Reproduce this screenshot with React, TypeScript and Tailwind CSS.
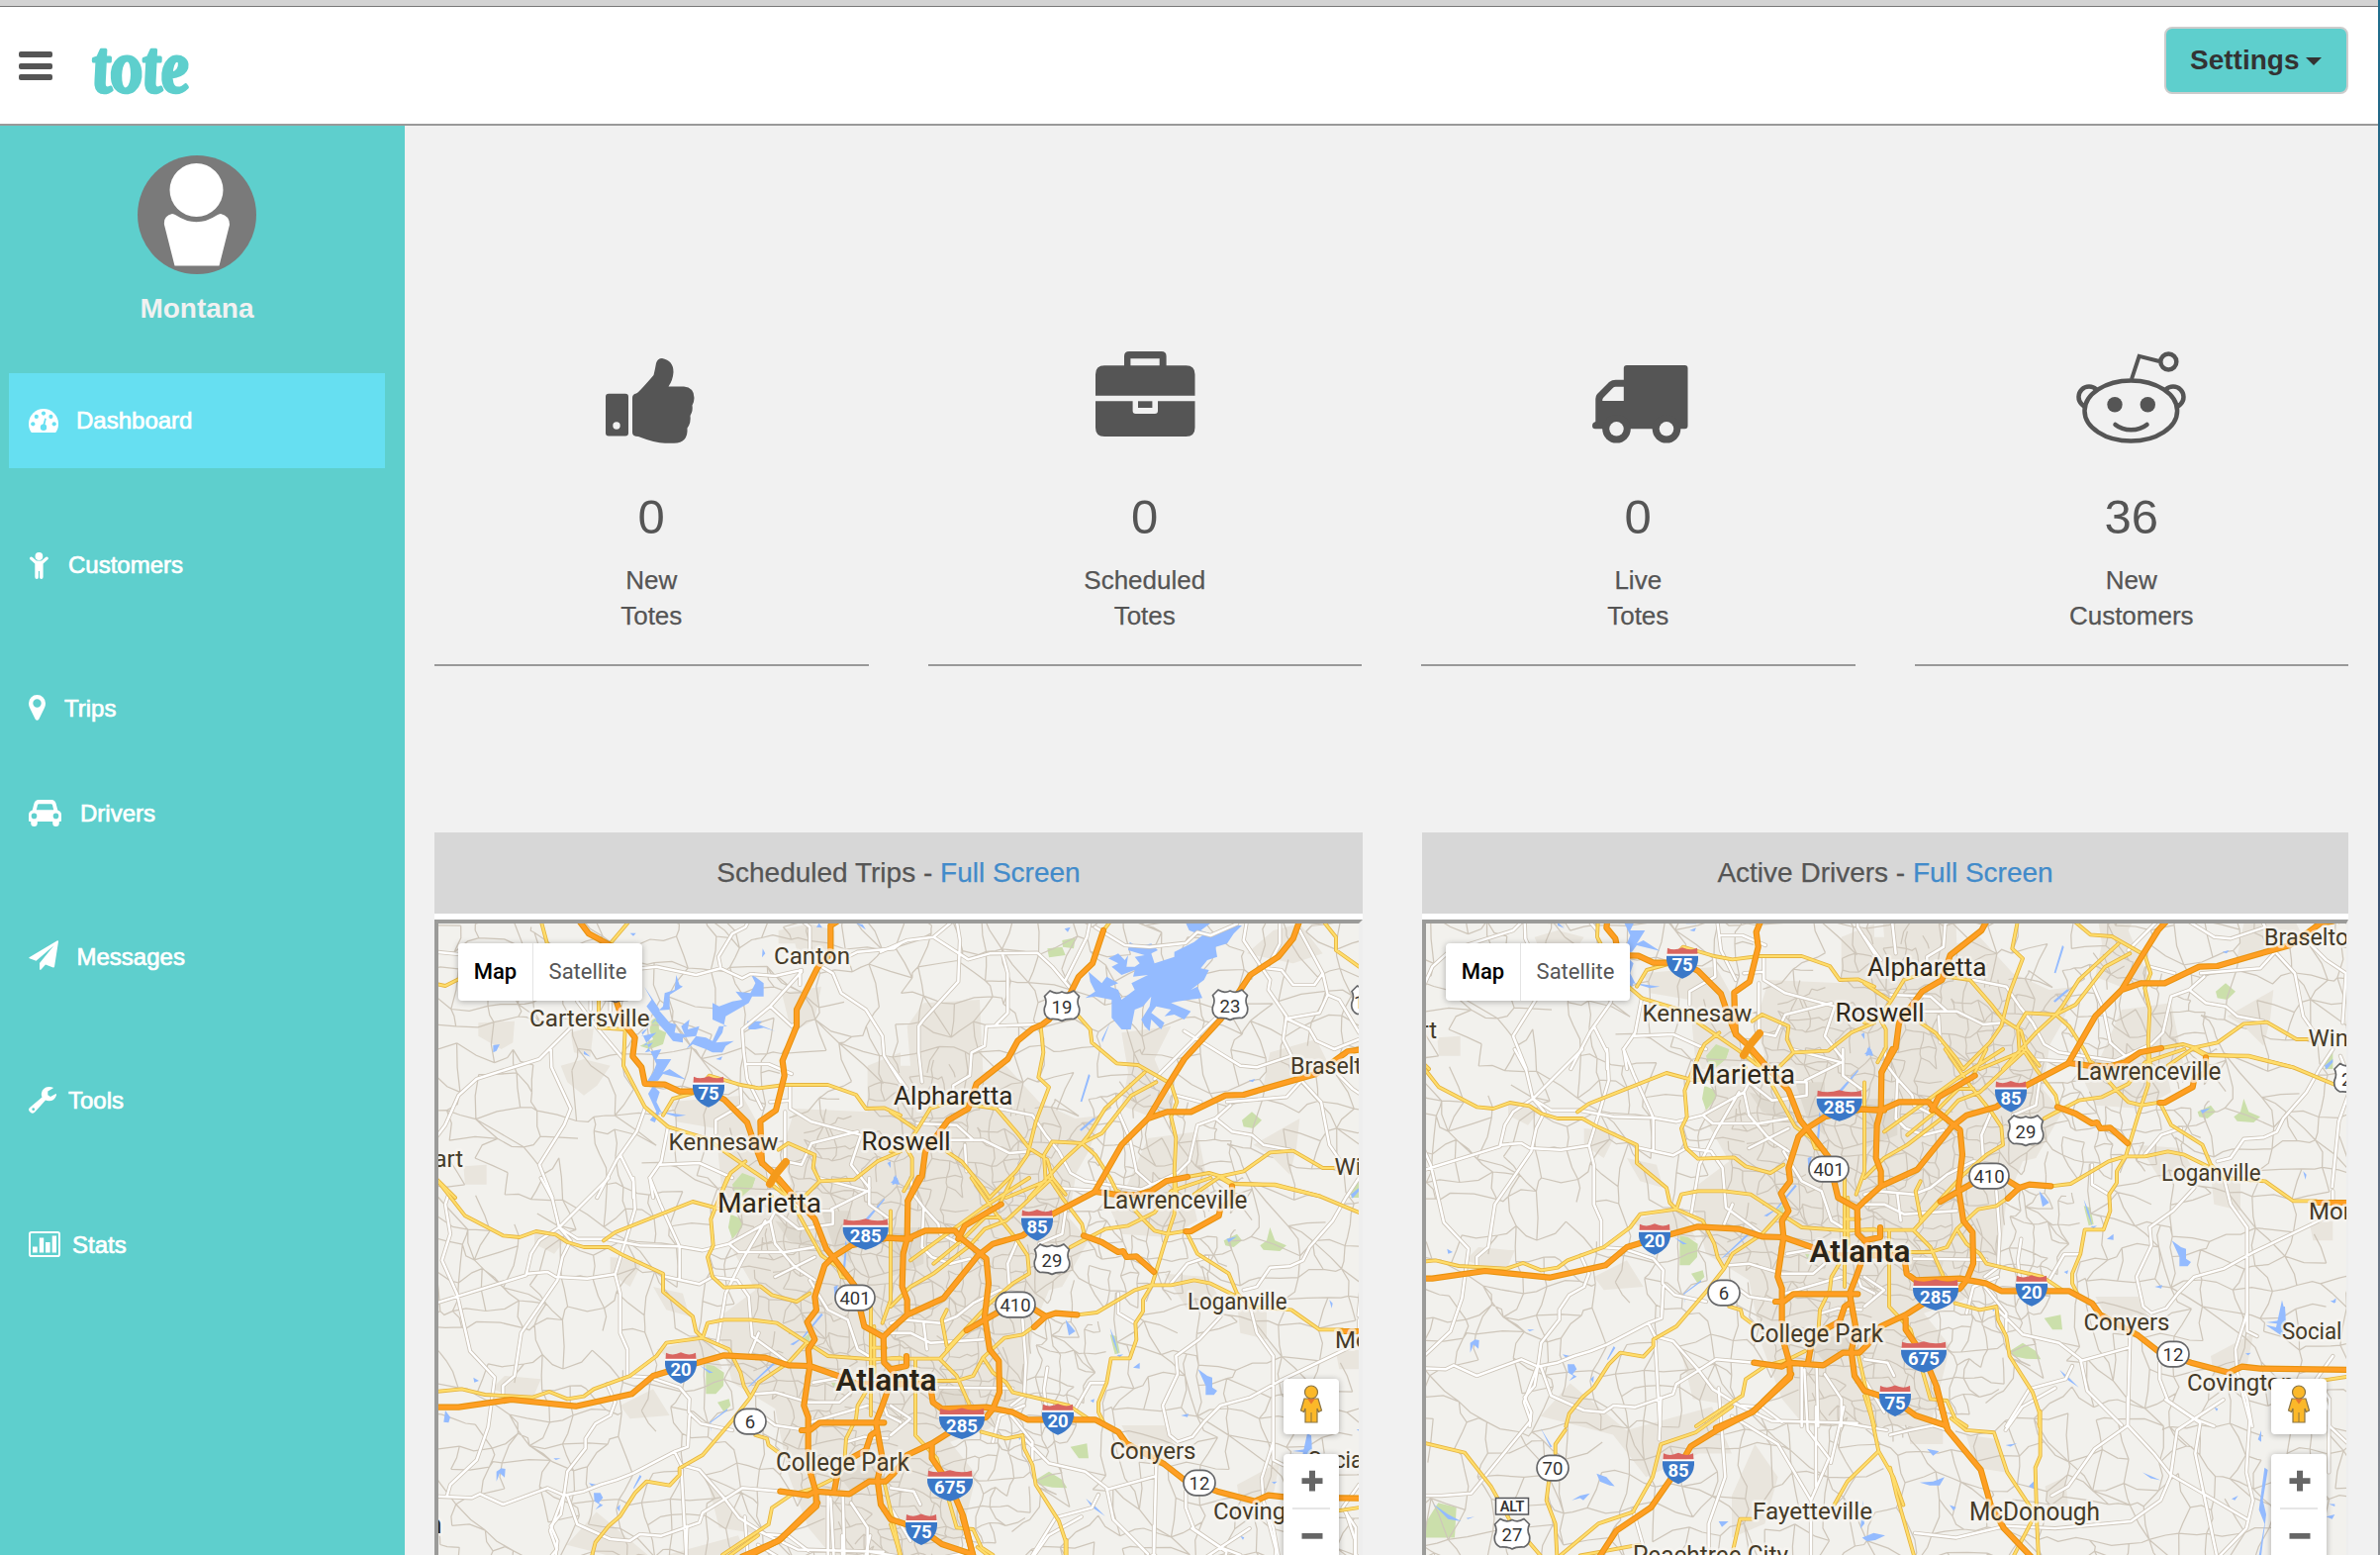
import React from "react";

/* ---------- Map data ---------- */

// Each tile holds path data in its own units, with the transform that puts it on the map plane.
const TILES: Record<string, string> = {
  nw: "translate(430 830) scale(.33333)",
  ne: "translate(900 830) scale(.33333)",
  sw: "translate(430 1190) scale(.33333)",
  se: "translate(900 1190) scale(.33333)",
  fw: "translate(446 960.5) scale(.33333 .4726)",
  fe: "translate(926 960.5) scale(.33333 .4726)",
};

type Layer = Record<string, string>;

const HIGHWAYS: Layer = {
  nw: "M465 300L495 340L560 375L577 540L600 610L635 655L628 712L655 745L665 795L725 797L770 818H860L905 842L975 912L1000 985L1020 1035L1060 1070L1120 1140M1245 305L1228 315V400L1190 440L1125 570V620L1082 725L1088 770L1062 875L1015 908L1018 1000L1020 1035",
  ne: "M645 330L612 430L570 470L545 520L480 600L460 615L430 628L385 665L355 720L260 795L235 870L175 905L145 945L105 1000L95 1075L52 1150M1240 300L1220 355L1175 410L1090 465L1060 510L1000 600L890 720L840 800L780 900L700 980L620 1120M1420 692L1385 697L1290 765L1165 800L1070 828L1015 830L910 880H838L780 900M900 1077L835 1090L790 1120L745 1132L680 1130L620 1122M1440 690L1500 680",
  sw: "M30 695H100L260 672L455 692L625 655L690 600L730 588L820 562L905 538L1030 545L1100 568L1165 570L1250 600L1310 625H1400M1065 0L1120 60L1180 125L1215 215L1235 240L1300 325L1330 450L1388 482L1390 560L1420 590L1385 690L1365 740L1385 850L1370 915L1380 990L1410 1035L1503 1065M1235 240L1210 265L1180 360L1185 400L1157 437L1180 490L1160 520L1165 570L1147 690L1160 725V870L1170 905L1183 950L1185 995L1070 1100L960 1148M1235 240L1290 205L1400 182L1470 185M1140 765H1165L1195 742H1390M1365 770L1350 780L1335 825L1290 850L1250 890L1240 945M1460 845L1420 895L1395 920H1345L1285 958L1180 950L1160 962L1075 950",
  se: "M-20 625H120L128 680L155 700L290 695L370 710L415 733H620L690 770L715 805L830 868L890 915L990 950L1105 980L1145 962L1200 968L1500 972M-10 182L50 185L105 160H195L210 180L290 245L297 320L285 420L300 520L328 555L330 650L310 700L290 725L220 745L125 805L50 840M85 0L52 70L50 185L38 230L35 330L50 370V415M620 42L490 110L400 175L310 200L265 235L160 365L50 415L0 460L-22 482M335 80L225 145L205 185M585 175L640 195L690 225L705 222L715 240L745 238L798 285M895 162H910L995 115L1000 90L1035 70V25M230 462L330 405L430 395L470 420L500 410L565 415M435 452L470 420M125 805V850L180 930L220 1025L250 1148M93 1065L155 1110L245 1140M0 580L48 570V540M1365 465H1480",
  fw: "M1140 1180L1025 1260L920 1298L835 1335L798 1381L715 1465L610 1515L550 1580",
  fe: "M140 1210L175 1300L275 1385L305 1460L345 1510L440 1580",
};

const YELLOW: Layer = {
  nw: "M350 300L370 375M615 305L560 370M30 492L60 498L100 478M525 540V625L605 630L600 740L665 865L735 925L850 960L920 1010L1030 1085L1100 1140M720 890L750 840L815 822L860 770L955 798L1010 808L1090 798H1220L1305 828L1335 870L1390 868L1440 890M30 1080L90 1140M1070 995L1100 975L1180 1010L1175 1050L1195 1090L1150 1135M1195 1090L1300 1085L1370 1030L1440 1000M890 1140L925 1065L970 1030",
  ne: "M668 300L645 330M1310 300L1350 350V390L1420 440M570 590L605 630L610 670L685 733L750 738L850 795L868 850L850 895L865 960L860 1060L868 1140M455 620L463 700L448 775L480 805L440 910L415 1010L380 1060L300 1140M0 880L80 935L120 870L180 850L320 870L385 945L420 990L475 1025L490 1080L530 1130M770 760L650 870L600 950L580 975M805 790L730 830L640 945L580 975L520 1030L420 1140M580 975L490 970L465 1010L470 1090L350 1140M580 975L620 1010L665 1080L690 1130M900 1077L965 1065L1000 1075L1070 1060L1150 1003L1220 998L1310 1050H1345M920 1130L1000 1075L1040 1098L1165 1102L1300 1135M170 1000L215 1030L280 1110L300 1140M0 1000L45 985L80 935M45 985L65 1020V1075L40 1120",
  sw: "M30 0L120 115L235 175L285 180L335 162L395 172L430 195L480 210H555L600 235L720 290V345L810 420L820 465L840 485L730 500L700 540L620 600L510 640L480 662L430 670L375 648L325 665L180 657L110 640L30 648M540 190L575 165L810 72L895 95L990 80L1050 55M915 0L865 125L872 205L855 240L870 300L905 332L1015 328L1050 355L1125 375L1165 350M840 485L855 440L905 430H985L1065 440L1220 540L1360 550L1440 545M840 485L920 520L955 590L965 630L985 665L930 735L840 840L770 880V900L740 932L670 920L635 955L590 1025L555 1055L515 1105L505 1143M985 665L1010 620L1100 560L1155 500M1000 780L1035 790L1040 810L1080 840M1060 0L1120 90L1200 235L1250 270L1260 300L1290 305M1350 390V720M1410 100V370L1385 440M1340 640L1310 690L1305 730L1275 790L1270 860M1390 920L1440 1143M900 1143L1040 1050L1050 1000L1110 960L1180 940L1230 915M1350 515H1395M1360 450V600",
  se: "M490 0L350 130L285 155L240 205L130 290L60 330L0 390M420 0L280 90L60 250M370 0L330 80M330 120H285L215 190L130 260M245 0L320 110L385 190L415 235L420 290M480 0L520 60L580 140L590 185L545 210M545 210L650 155L720 145L800 105L850 40L970 0M860 0V110L830 200L792 325M690 40L760 120L800 160L840 170L900 160M1000 0L1030 18L1165 20L1300 55L1480 130M895 160L930 230L1025 290L1050 350L1090 390L1215 400L1300 460H1370M565 415L625 408L740 340L790 325H850L920 310L970 320L1040 355M792 325L765 370V405L742 440L745 490L725 547H668L655 620L630 680V710L645 740M0 548H150L230 460M170 510L155 430L170 400M420 290L370 320L300 380L170 520M150 550L200 600L240 690M280 545L310 590L350 620L370 650L540 690L600 730M435 450L400 475L345 485L280 545L250 600L200 615H0M75 550V780L140 850L200 1060L250 1065L275 1120L310 1143M275 770L350 790L400 780L405 820L430 870L440 930L510 1040L530 1100V1143M0 1050L30 1143M1350 1010L1480 990",
  fw: "M30 1328L150 1348L230 1420L285 1490L380 1568M455 1300L425 1330V1350M405 1410L398 1450L425 1500L430 1568M440 1568L555 1500L660 1475L720 1400L745 1330L850 1305L960 1250M1380 1260L1405 1345L1450 1400L1480 1460M1405 1345L1310 1410L1270 1460M1020 1490H985L960 1568M500 1568L680 1545",
  fe: "M455 1260V1355L440 1380L445 1500L450 1575M185 1275L230 1300L315 1305L355 1390L440 1480L375 1568M0 1380L20 1440L75 1575",
};

const WHITE: Layer = {
  nw: "M30 395L100 402L330 390M655 445L700 440L820 465L895 445L960 475L985 462L1060 468L1140 450M895 445L888 410L930 340L970 320L980 300M1140 300L1165 320V400M1135 450V495M1140 455L1045 560L960 630L965 700L975 780L1020 870M1200 440L1235 460L1260 520L1335 570L1385 650L1390 710L1440 790M1280 410L1310 395L1420 385L1440 370M1045 560L1110 620L1125 610M975 735H1040L1110 765M440 625L345 720L155 780L100 830L60 920L30 960M380 690L382 745L440 870L420 920L345 1040L385 1140M460 545L520 625L600 720M665 870L640 940L580 1025L520 1140M735 925L715 1030L680 1080L690 1140M590 1010L630 1090V1140M710 1040L830 1035L930 1080M955 798L958 860L880 905V945M1105 800V870L1170 910L1320 950L1290 1040L1345 1110M1090 880V1030L1140 1040L1170 975L1310 940M1045 850L1105 845M560 545V600M500 545V570",
  ne: "M-30 395L50 360L130 350L190 300M130 350L235 418L300 400L445 398L490 440L540 500M200 300L210 360L205 485L100 600L85 620V700L95 790M340 405L355 460V580L320 615M455 615L290 620L285 680L245 700L240 770L190 800V850M605 300L595 350L530 480M620 320L710 375L785 380L895 368L930 335L970 345L1050 310M1180 300V370L1140 445L1185 450L1220 495L1285 495L1310 460L1240 330M1080 300L1070 360L1150 480L1145 510L1200 590L1190 660L1215 710L1110 745L1060 740L890 635M1310 460L1325 525L1300 580L1200 597L1270 630L1290 665L1345 690L1420 660M1325 525L1360 540L1420 640M1060 525L950 630L800 780M0 740L50 810M80 915L200 920L250 965M180 965H280L360 1005L420 1000M330 870L430 890L470 950L510 1000L545 1065L590 1090L760 1115L870 1065M225 980L230 1060M690 880L725 960L745 1060L790 1100M1030 860L985 900L930 920L905 1030L870 1065M985 900L1035 940L1095 950L1130 980L1210 995M1250 790L1305 850L1330 980L1385 1060M865 830L940 850M1250 780L1200 835L1020 850M1350 760L1400 810L1460 850L1450 1000",
  sw: "M350 0L385 65L405 150L440 190L415 240L400 310L290 470L270 600L235 630V655M405 150L345 190L320 230L305 295L30 380M405 150L555 0M70 50L60 80L75 170L50 250L95 350L135 525L210 605L190 755L155 855L75 930L65 965M310 290L370 285L395 300L490 305L575 292L590 350V470L612 520V600L680 605L770 635L800 670L798 710L835 745L930 765M575 292L610 180L635 95L630 0M405 150L460 185H545L650 205L770 208L840 220L920 200L1045 130L1060 100M770 208V305M720 298L830 322L870 300M680 0L712 80L770 208M30 965L140 970L165 958L235 990L370 940L420 962L480 950L530 930L580 915L630 895L755 830L775 870L830 885L905 970L950 1030L1030 1080L1100 1085L1160 1130M420 962L430 890L485 820V790L515 745L560 720L575 680L550 625M420 962L410 1020L380 1055L400 1100L395 1143M430 965L460 1050L560 1095L620 1100L650 1080L715 1085L830 1045L840 1015L905 975L960 940L1075 950M755 830L795 815L800 720M775 870L790 1143M920 200L950 225H1090L1180 210M1045 130L1060 200L1120 270L1180 310M1060 100L1130 155L1180 150M1030 130L960 250L910 350L885 500M870 300L945 310L980 360L990 480L1100 560M1010 470L985 530M1000 655L1060 650L1160 680H1255L1290 650M1175 620L1290 600M1020 720L1060 750L1140 762M1170 740L1340 690M1060 70L1200 100H1235V140L1130 155M1220 950V1143M1265 960L1270 1143M1290 985L1340 1060V1143M1165 310L1220 400L1280 430L1310 520L1360 550M1280 800L1330 785L1400 790M1385 680L1400 720L1440 740M1060 300L1180 240M1190 0L1340 40L1230 95M1345 0V80L1400 120",
  se: "M60 0L70 50L100 90L145 140L150 170L210 200M100 90L95 210L125 240L180 260L240 245M0 440L40 430L150 440L200 420L250 380L330 340L420 355M0 470H60L120 500L280 490M385 190L355 260L360 330M400 430L410 560L405 660L365 690M150 635L370 638M475 575L465 640L470 690M650 622H605L560 700M405 690L330 720L310 800M365 720L430 800V855M405 790L480 865L590 890L655 940L675 1035L780 1140M655 945L800 905M630 960L610 1000L500 1030L430 1143M805 870L798 1143M895 950V1000L920 1065L1000 1120L1060 1143M1420 0L1380 60L1340 130L1270 210L1250 250L1210 268L1150 272L1110 330L1070 340M1090 390L1110 470L1160 540V855L1190 870M1160 800L1125 910L1130 980L1160 1060L1175 1143M1000 420L935 490L865 540L870 595L825 690L845 780L870 800L915 785L950 740L1000 690L1090 665L1180 615L1420 500V430M1420 930L1370 1000L1410 1060V1143M690 350V410L740 440M850 320L900 260L960 240M0 690L60 730L0 780M0 940L70 950L90 990M100 440L110 520M0 1000L60 1100M500 30L640 40M450 200L520 170L530 100",
  fw: "M30 1440H80L170 1435L350 1280L330 1240L370 1165M745 1230L740 1320M960 1240L1080 1280L1340 1285M920 1210L940 1400L890 1500V1568M960 1270L1100 1330L1200 1450M1180 1170L1190 1300L1255 1360L1200 1450V1568M1215 1250V1420M1300 1250L1260 1370M660 1470L700 1568M1300 1285L1430 1300",
  fe: "M720 1230V1290L800 1350L850 1395L960 1440L1080 1490M720 1290L620 1340L540 1420L490 1440M835 1235L940 1285L925 1350L990 1568M1010 1235L870 1300L850 1400L820 1450L730 1495L500 1510L350 1505L200 1530L75 1520M1060 1200L1090 1280L1080 1390L1100 1450L1080 1510L1000 1568M1300 1195L1330 1260V1390M0 1310L60 1300L130 1290L175 1300M350 1300L400 1250L500 1210M1330 1290L1390 1330M1365 500L1400 560L1360 640L1340 780",
};

const URBAN: Layer = {
  nw: "M160 610L270 605L265 670L230 690L160 650ZM410 740L480 720L560 740L520 800L480 830L430 790ZM740 850L960 830L1010 920L1040 1140H900L880 930L760 910ZM1070 330L1165 310L1240 330V420L1140 440L1120 370H1070ZM1080 520L1200 500L1180 600L1110 640ZM115 1045L185 1040V1100H120ZM1340 740L1440 700V1140H1120L1080 1000L1120 870L1340 880ZM440 640L510 620L500 710L450 700Z",
  ne: "M50 620L100 550L270 540L280 760L350 740L450 850L560 900L640 890L600 1000L520 1140H0V740L60 740ZM1080 400L1160 330L1240 310L1310 400L1220 430ZM700 640L850 620L800 720L860 860L800 900L700 860L720 760ZM1150 700L1290 660L1330 740L1230 790L1130 800ZM1100 980L1240 900L1230 990L1210 1070L1150 1010ZM780 960L930 940L970 1140H700Z",
  sw: "M1130 0H1440V1143H1230L1160 1060L1100 900L1060 700L930 620L880 430L1000 340L920 200L960 80L1050 70ZM330 160L430 180L390 230L330 200ZM560 240L660 250L620 330L560 290ZM240 600L350 610L320 680L200 640ZM590 690L690 640L740 720L620 730ZM700 520L860 480L900 580L760 560ZM850 900L920 980L1010 1080L890 1060ZM690 330L780 350L800 420L730 400Z",
  se: "M0 0H560L540 120L600 190L520 330L480 340L430 460L410 640L300 760L180 800L260 900L200 1143H0ZM640 40L900 0L930 130L840 180L700 170ZM830 290L960 300L1000 370L900 400ZM1050 380L1140 400V490L1060 470ZM700 750L830 750L880 850L760 860ZM1050 930L1180 860L1160 960L1060 1000ZM1350 530L1420 520V580H1360Z",
  fw: "M380 1270L470 1200L640 1300L900 1250L960 1350L860 1350L700 1400L600 1310ZM960 1440L1030 1330L1100 1400L1060 1500L960 1530Z",
  fe: "M230 1310L330 1320L350 1390L260 1380ZM470 1420L530 1400L540 1460L480 1480ZM60 1280H160V1330H60Z",
};

const AIRFIELD: Layer = {
  sw: "M1250 900L1360 850L1370 910L1290 950ZM1200 100H1290V260L1240 220ZM1060 130L1160 160L1180 220L1100 190Z",
  se: "M0 150H100V260L0 300ZM130 640H240L230 690L150 690Z",
};

const PARKS: Layer = {
  nw: "M680 605L705 590L708 630L730 640L720 675L680 690L650 680L690 660L680 635ZM930 1100L960 1065L1000 1080L990 1110L940 1140Z",
  ne: "M1065 905L1095 880L1125 905L1100 930L1070 925ZM475 385L520 380L530 405L480 412ZM520 360L560 352L555 385L522 380ZM1390 1130L1420 1085V1140Z",
  sw: "M850 565L875 570L905 590L903 630L880 655L850 655ZM960 0H1000L990 30L955 60L960 100L930 80ZM925 110L960 125L960 150L930 185L918 150ZM885 680L920 670L925 690L905 710ZM1140 490L1165 470V500ZM1230 620L1265 625L1240 640Z",
  se: "M1010 190L1050 170L1065 190L1040 210L1015 205ZM1120 205L1140 190L1150 150L1165 190L1200 205L1180 222L1130 218ZM440 915L480 890L520 915L535 940L490 938L450 930ZM665 475L685 480L695 530L680 535ZM545 815L595 805L600 850L570 850ZM1395 60L1410 20L1420 60Z",
  fw: "M30 1500L70 1455L125 1465L120 1530H30Z",
};

const WATER: Layer = {
  nw: "M663 500L710 570L720 560L725 520L755 510L760 465L770 495L780 500L740 525V570L708 572L740 610L760 615L755 640L785 645L775 620L800 600L795 630L830 620L820 650L850 655L870 665L890 620L915 620L870 600V550L890 560L930 545L960 540L940 515L985 520L1000 490L985 460L1025 490V530L990 530L980 550L910 590L900 640L880 670L935 665L910 680L900 700L870 700L850 690L810 675L790 690L820 650L780 655V670L750 665L730 640L695 600L655 650L700 640L660 680L690 670L665 700L715 690L700 720L745 720L720 760L740 750L790 782L720 765L705 785L670 790L690 760L700 735L655 640L700 600L670 560L685 540ZM690 800L710 820L700 850L715 880L790 890L760 895L710 880L695 912L680 905L700 880L675 825ZM975 605L1020 605L1010 615L1060 635L1025 625L1000 630L980 630ZM205 700V678L225 675L215 695ZM480 705L500 713L480 695ZM1185 320L1193 308L1203 322ZM1022 385L1030 400L1020 412ZM1305 308L1335 328L1325 312ZM620 338H638L630 347ZM880 720L900 712L895 723ZM1415 1100L1435 1095L1420 1075ZM1400 1035L1410 1030V1050Z",
  ne: "M895 308H970L940 330L970 340L1000 330L1035 315L1065 315L1040 340L1020 370L985 380L990 410L960 420L940 445L965 450L950 480L910 510L930 500L945 535L905 540L870 545L850 550L910 575L890 600L860 585L830 590L850 570L805 560L790 580L830 610L820 630L790 600L785 635L770 620L760 600L785 560L790 530L765 560L740 570L728 630L700 630L670 595V540L620 530L590 535L620 515L605 485L600 455L640 490L655 470L690 490L665 500L690 510L700 540L740 510L730 490L780 465L735 470L740 450L700 465L670 440L690 430L660 415L690 400L710 420L720 405L715 440L740 440L755 430L740 410L770 405L720 390L725 365L750 380L790 370L810 390L790 400L800 430L860 410L860 395L920 365L945 345L905 330ZM600 765L605 770L580 850L575 848ZM615 898L620 902L578 938L573 934ZM527 325L545 320L537 335ZM5 1100L15 1070L25 1095ZM1085 785L1105 780L1098 790ZM640 660L665 610L642 670Z",
  sw: "M55 740L60 705L75 725L70 742ZM145 605L162 615L148 620ZM215 890L230 880L242 882L240 908L225 895L215 920ZM495 925L520 930L508 938ZM510 955L530 955L538 970L525 985L538 992L515 1005L528 990L512 980ZM580 1000L590 990L588 1012ZM388 850H410L395 855ZM833 570L872 590L860 592L845 580ZM862 740L915 700V705L865 742V770ZM975 635L1070 545L1075 550L985 630ZM1105 505L1140 485L1200 410L1205 415L1150 480L1115 507ZM1238 330L1250 325L1245 370L1240 360ZM1272 210V190L1278 200L1272 280L1266 270ZM1333 125L1390 62L1392 66L1340 130ZM1415 15L1430 0L1437 20ZM630 940L650 900L655 905L632 942Z",
  se: "M735 575L755 560V578ZM932 580L960 600L975 605V635L990 645L980 658H955V630ZM880 720L903 715L900 725ZM1265 780H1275L1278 835L1218 828L1260 822ZM530 430L560 465L540 478ZM665 455L680 490L692 540L675 495ZM685 538L705 535L695 543ZM1018 185L1050 178L1025 195ZM1330 370L1340 380L1337 395ZM605 675L618 670L615 682ZM1155 922L1172 920L1163 928ZM592 972L620 995L650 1025L610 998ZM1060 1085L1072 1090L1068 1097ZM388 785L395 790L390 795ZM1395 50L1420 30V40L1400 62ZM1412 762H1425V770ZM0 15L15 0L25 20Z",
  fw: "M550 1393L580 1400L605 1420L590 1418L560 1410ZM475 1450L500 1440L530 1435L510 1450L500 1445ZM55 1458L100 1480L140 1495L100 1490ZM920 1495H950L930 1507ZM1355 1530L1390 1520L1425 1525L1395 1535L1370 1538ZM1350 1510L1358 1450L1362 1500ZM380 1295L415 1335L410 1337ZM155 1488L180 1485L160 1490Z",
  fe: "M90 1412L130 1410L165 1400L150 1418L120 1418ZM112 1340L148 1345L130 1355ZM350 1332L385 1328L365 1335ZM765 1390L820 1407L790 1403ZM1135 1380L1145 1385L1130 1450L1140 1480L1125 1568H1118L1135 1500L1118 1470ZM1115 1320L1125 1300V1325ZM1035 1447L1055 1440L1045 1450ZM180 1460L200 1465L192 1472ZM420 1420L435 1410V1425ZM1322 1485L1348 1480L1340 1490ZM1330 1458H1348V1463ZM1138 1075L1170 1080L1188 1022L1198 1050L1190 1100ZM1338 1025L1352 1018L1350 1028Z",
};

// Deterministic street mesh: jittered grid nodes joined by irregular edges.
function streetMesh(
  x0: number, y0: number, x1: number, y1: number, step: number, keep: number, seed: number,
  inside: (x: number, y: number) => boolean,
) {
  let s = seed;
  const rnd = () => {
    s = (s * 1664525 + 1013904223) % 4294967296;
    return s / 4294967296;
  };
  const cols = Math.ceil((x1 - x0) / step) + 1;
  const rows = Math.ceil((y1 - y0) / step) + 1;
  const node: number[][][] = [];
  for (let r = 0; r < rows; r++) {
    node.push([]);
    for (let c = 0; c < cols; c++)
      node[r].push([x0 + (c + (rnd() - 0.5) * 0.85) * step, y0 + (r + (rnd() - 0.5) * 0.85) * step]);
  }
  let d = "";
  const edge = (a: number[], b: number[]) => {
    const k = rnd();
    const mx = (a[0] + b[0]) / 2 + (rnd() - 0.5) * step * 0.3;
    const my = (a[1] + b[1]) / 2 + (rnd() - 0.5) * step * 0.3;
    if (k < keep && inside(mx, my))
      d += `M${a[0].toFixed(1)} ${a[1].toFixed(1)}L${mx.toFixed(1)} ${my.toFixed(1)}L${b[0].toFixed(1)} ${b[1].toFixed(1)}`;
  };
  for (let r = 0; r < rows; r++)
    for (let c = 0; c < cols; c++) {
      if (c + 1 < cols) edge(node[r][c], node[r][c + 1]);
      if (r + 1 < rows) edge(node[r][c], node[r + 1][c]);
      if (c + 1 < cols && r + 1 < rows && (r * 7 + c * 3) % 5 === 0) edge(node[r][c], node[r + 1][c + 1]);
    }
  return d;
}

const metro = (x: number, y: number) =>
  Math.hypot((x - 935) / 175, (y - 1330) / 250) < 1 || Math.hypot((x - 1120) / 140, (y - 1210) / 110) < 1;
const MESH_RURAL = streetMesh(435, 925, 1400, 1715, 28, 0.74, 7, (x, y) => !metro(x, y));
const MESH_METRO = streetMesh(700, 1060, 1290, 1610, 16, 0.7, 21, metro);

const LABELS: { t: string; x: number; y: number; w?: number; s: number; c?: string; b?: number; end?: boolean }[] = [
  { t: "Canton", x: 782, y: 973.5, w: 77, s: 24 },
  { t: "Cartersville", x: 535, y: 1036.5, w: 121.5, s: 24 },
  { t: "Kennesaw", x: 675.5, y: 1161.7, w: 111, s: 24 },
  { t: "art", x: 468, y: 1178.7, s: 24, end: true },
  { t: "Marietta", x: 725, y: 1224.7, w: 105, s: 27, c: "#2f281a" },
  { t: "Roswell", x: 870.5, y: 1161.7, w: 90, s: 25.5, c: "#2f281a" },
  { t: "Alpharetta", x: 903, y: 1115.7, w: 120.5, s: 26, c: "#2f281a" },
  { t: "Braselton", x: 1304, y: 1085.3, w: 98, s: 24 },
  { t: "Winder", x: 1348.5, y: 1187, s: 24 },
  { t: "Lawrenceville", x: 1114, y: 1220.5, w: 146.5, s: 25 },
  { t: "College Park", x: 784, y: 1485.5, w: 135, s: 25 },
  { t: "Loganville", x: 1200, y: 1323.3, w: 100.5, s: 24 },
  { t: "Monroe", x: 1349, y: 1361.7, s: 24 },
  { t: "Conyers", x: 1121.5, y: 1473.5, w: 87, s: 24 },
  { t: "Covington", x: 1226, y: 1535, s: 24 },
  { t: "Social", x: 1322, y: 1483.3, w: 60.5, s: 23 },
  { t: "Fayetteville", x: 787, y: 1664.7, w: 121, s: 24 },
  { t: "McDonough", x: 1006, y: 1665.5, w: 132, s: 25 },
  { t: "Peachtree City", x: 666, y: 1710, w: 157, s: 25 },
  { t: "n", x: 446.5, y: 1549, s: 26, c: "#2f281a", end: true },
  { t: "Atlanta", x: 844.5, y: 1405, w: 102, s: 31, c: "#2a2418", b: 600 },
];

const INTERSTATES: [string, number, number][] = [
  ["75", 716, 1103.2], ["285", 874.7, 1247.2], ["20", 688, 1382.3], ["85", 1048, 1238], ["20", 1069, 1434.3],
  ["285", 972, 1438.6], ["675", 960, 1501.2], ["75", 931, 1545.5], ["85", 712, 1613.8],
];
const STATES: [string, number, number][] = [
  ["401", 864, 1311], ["6", 758, 1436], ["410", 1026, 1318], ["12", 1212, 1498], ["70", 585, 1613],
];
const US_ROUTES: [string, number, number][] = [
  ["19", 1073, 1016], ["23", 1243, 1015], ["29", 1063, 1272], ["", 622, 997], ["129", 1383.5, 1011], ["29", 1392.5, 1219.5], ["27", 544, 1679.5],
];

function Roads({ layer, stroke, width }: { layer: Layer; stroke: string; width: number }) {
  return (
    <g fill="none" stroke={stroke} strokeWidth={width} strokeLinejoin="round" strokeLinecap="round">
      {Object.entries(layer).map(([k, d]) => (
        <path key={k} d={d} transform={TILES[k]} vectorEffect="non-scaling-stroke" />
      ))}
    </g>
  );
}

function Areas({ layer, fill }: { layer: Layer; fill: string }) {
  return (
    <g fill={fill}>
      {Object.entries(layer).map(([k, d]) => (
        <path key={k} d={d} transform={TILES[k]} />
      ))}
    </g>
  );
}

function Interstate({ n, x, y }: { n: string; x: number; y: number }) {
  const w = n.length === 3 ? 23 : 16;
  return (
    <g transform={`translate(${x} ${y})`}>
      <path d={`M${-w + 1} -15.5Q${-w / 2} -12 0 -16Q${w / 2} -12 ${w - 1} -15.5L${w - 0.5} -9H${-w + 0.5}Z`} fill="#d96560" />
      <path d={`M${-w} -9.5H${w}V-7H${-w}Z`} fill="#fff" />
      <path d={`M${-w} -7.5H${w}Q${w + 1} 9 0 15.5Q${-w - 1} 9 ${-w} -7.5Z`} fill="#3a78c8" />
      <text y="8" textAnchor="middle" fontSize="18.5" fontWeight="700" fill="#fff">{n}</text>
    </g>
  );
}

function StateShield({ n, x, y }: { n: string; x: number; y: number }) {
  const w = n.length === 3 ? 40 : 32;
  return (
    <g transform={`translate(${x} ${y})`}>
      <rect x={-w / 2} y="-12.7" width={w} height="25.5" rx="12.7" fill="#fff" stroke="#666769" strokeWidth="1.7" />
      <text y="6.5" textAnchor="middle" fontSize="18.5" fill="#333">{n}</text>
    </g>
  );
}

function UsShield({ n, x, y }: { n: string; x: number; y: number }) {
  return (
    <g transform={`translate(${x} ${y})`}>
      <path
        d="M-12 -15Q-6 -11 0 -14Q6 -11 12 -15L17.5 -9.5Q14.5 -4 17.5 2Q19 10 12 13.5Q4 13 0 15.5Q-4 13 -12 13.5Q-19 10 -17.5 2Q-14.5 -4 -17.5 -9.5Z"
        fill="#fff" stroke="#666769" strokeWidth="1.7" strokeLinejoin="round"
      />
      {n && <text y="7.5" textAnchor="middle" fontSize="18.5" fill="#333">{n}</text>}
    </g>
  );
}

function MapCanvas({ x, y, width }: { x: number; y: number; width: number }) {
  return (
    <svg className="block shrink-0 font-['Roboto',sans-serif]" width={width} height={642} viewBox={`${x} ${y} ${width} 642`}>
      <rect x={x} y={y} width={width} height="642" fill="#f2f1ed" />
      <Areas layer={URBAN} fill="#e9e5dd" />
      <Areas layer={AIRFIELD} fill="#dfdad0" />
      <Areas layer={PARKS} fill="#cbdfab" />
      <g fill="none" stroke="#cec6ba" strokeWidth="1.25">
        <path d={MESH_RURAL} />
        <path d={MESH_METRO} />
      </g>
      <Areas layer={WATER} fill="#94bbff" />
      <Roads layer={WHITE} stroke="#cdc5b9" width={4.2} />
      <Roads layer={WHITE} stroke="#ffffff" width={2.5} />
      <Roads layer={YELLOW} stroke="#e5b441" width={3.9} />
      <Roads layer={YELLOW} stroke="#ffdd6b" width={2.2} />
      <Roads layer={HIGHWAYS} stroke="#e8930f" width={6.2} />
      <Roads layer={HIGHWAYS} stroke="#ff9f24" width={4} />
      <path d="M794 1174L784 1186L778 1196" fill="none" stroke="#f49a1b" strokeWidth="8" strokeLinecap="round" />
      {LABELS.map((l) => (
        <text
          key={l.t} x={l.x} y={l.y} fontSize={l.s} fontWeight={l.b ?? 400} fill={l.c ?? "#453b28"} textLength={l.w}
          lengthAdjust="spacingAndGlyphs" textAnchor={l.end ? "end" : "start"} stroke="#f8f6f2" strokeOpacity=".72"
          strokeWidth="5.5" strokeLinejoin="round" paintOrder="stroke"
        >
          {l.t}
        </text>
      ))}
      {INTERSTATES.map(([n, a, b]) => <Interstate key={`${a}`} n={n} x={a} y={b} />)}
      {STATES.map(([n, a, b]) => <StateShield key={`${a}`} n={n} x={a} y={b} />)}
      {US_ROUTES.map(([n, a, b]) => <UsShield key={`${a}`} n={n} x={a} y={b} />)}
      <rect x="527.5" y="1643.5" width="33" height="16.5" fill="#fff" stroke="#55565a" strokeWidth="1.5" />
      <text x="544" y="1657" textAnchor="middle" fontSize="14.5" fontWeight="600" fill="#333">ALT</text>
    </svg>
  );
}

/* ---------- Icons ---------- */

const ThumbIcon = () => (
  <svg width="90" height="86" viewBox="0 0 90 86" className="-translate-x-px fill-[#555]">
    <path fillRule="evenodd" d="M3 35.7H20Q23 35.7 23 38.7V75.5Q23 78.5 20 78.5H3Q0 78.5 0 75.5V38.7Q0 35.7 3 35.7ZM11 64.3A3.7 3.7 0 1 0 11 71.7A3.7 3.7 0 1 0 11 64.3Z" />
    <path d="M27 40Q27 36 31 35.5Q33 35 48.5 17Q50 11 51 5Q52.5 0 57 0Q68.5 2 68.5 14Q68 22 63.5 28.5H79Q89.5 29.5 89.5 40Q89.5 44 87.5 47.5Q88.5 53 85.5 58Q86.5 65 82.5 70.5Q83.5 85.5 69 85.7H60Q50 85.7 33 79Q27 79 27 75Z" />
  </svg>
);

const BriefcaseIcon = () => (
  <svg width="101" height="86" viewBox="0 0 101 86" className="translate-x-px fill-[#555]">
    <path d="M0 44.7V23.3Q0 14.3 9 14.3H29V5Q29 0 34 0H66.6Q71.6 0 71.6 5V14.3H91.5Q100.5 14.3 100.5 23.3V44.7ZM35.4 14.3H64.7V7.3H35.4Z" fillRule="evenodd" />
    <path d="M0 50.3H37.6V60Q37.6 63 40.6 63H60Q63 63 63 60V50.3H100.5V77Q100.5 86 91.5 86H9Q0 86 0 77Z" />
    <path d="M43 50.3H57.4V57H43Z" />
  </svg>
);

const TruckIcon = () => (
  <svg width="97" height="79" viewBox="0 0 97 79" className="translate-x-0.5 fill-[#555]">
    <path fillRule="evenodd" d="M35 0H93.5Q96.5 0 96.5 3V61Q96.5 64.3 93.5 64.3H3Q0 64.3 0 61Q0 58 3.3 57V34Q3.3 31 5 29L17 17Q20 14.7 23.7 14.7H31.8V3Q31.8 0 35 0ZM10.2 36H31.8V21.7H23.5Q22 21.7 21 22.7L11 33Q10.2 34 10.2 36Z" />
    <circle cx="24.5" cy="64.3" r="14.3" /><circle cx="75" cy="64.3" r="14.3" />
    <circle cx="24.5" cy="64.3" r="7.2" fill="#f1f1f1" /><circle cx="75" cy="64.3" r="7.2" fill="#f1f1f1" />
  </svg>
);

const RedditIcon = () => (
  <svg width="111" height="94" viewBox="0 0 111 94" className="translate-y-px fill-none stroke-[#555]" strokeWidth="4.5">
    <circle cx="13" cy="46" r="10.5" /><circle cx="98" cy="46" r="10.5" />
    <ellipse cx="55.3" cy="60" rx="46.8" ry="30.6" fill="#f1f1f1" />
    <path d="M56 28L63.6 4.8L84 10" strokeWidth="4" />
    <circle cx="93.3" cy="10.5" r="8" />
    <circle cx="39" cy="53.7" r="7.7" fill="#555" stroke="none" /><circle cx="72.3" cy="53.7" r="7.7" fill="#555" stroke="none" />
    <path d="M39.500 74Q46 79.3 55.5 79.3Q65 79.3 71.5 74" strokeLinecap="round" />
  </svg>
);

const GaugeIcon = () => (
  <svg width="30" height="24" viewBox="0 0 30 24" fill="#fff">
    <path d="M2.8 24Q0 20.5 0 15A15 15 0 0 1 30 15Q30 20.5 27.2 24Z" />
    <g fill="#66dff1">
      <circle cx="4.3" cy="15.3" r="2.1" /><circle cx="7.8" cy="7.9" r="2.1" /><circle cx="15" cy="4.6" r="2.1" />
      <circle cx="22.4" cy="7.9" r="2.1" /><circle cx="25.7" cy="15.3" r="2.1" /><circle cx="15" cy="18.8" r="3.2" />
      <path d="M14.2 17L16.2 9.6L17.8 10L16 17.5Z" />
    </g>
  </svg>
);

const ChildIcon = () => (
  <svg width="20" height="27" viewBox="0 0 20 27" fill="#fff">
    <circle cx="10.4" cy="4" r="3.9" />
    <path d="M1.2 5.3Q2.3 3.8 3.8 5L7.8 8.5H13L17 5Q18.5 3.8 19.6 5.3Q20.3 6.5 19 7.6L14.6 11.5V25Q14.6 27 12.7 27Q11 27 11 25.3V19H9.9V25.3Q9.9 27 8.2 27Q6.3 27 6.3 25V11.5L1.8 7.6Q.5 6.5 1.2 5.3Z" />
  </svg>
);

const MarkerIcon = () => (
  <svg width="17" height="26" viewBox="0 0 17 26" fill="#fff" className="-translate-y-px">
    <path fillRule="evenodd" d="M8.5 0A8.5 8.5 0 0 1 17 8.5Q17 10.8 16 13L10.4 24.5Q8.5 27 6.6 24.5L1 13Q0 10.8 0 8.5A8.5 8.5 0 0 1 8.5 0ZM8.5 4.3A4.2 4.2 0 1 0 8.5 12.7A4.2 4.2 0 1 0 8.5 4.3Z" />
  </svg>
);

const CarIcon = () => (
  <svg width="33" height="27" viewBox="0 0 33 27" fill="#fff" className="-translate-y-px">
    <path fillRule="evenodd" d="M10 0H23Q26.5 0 27.5 3.5L29.3 10.5Q33 11.5 33 15V21Q33 22 32 22H30.8V23.5Q30.8 27 27.5 27Q24.2 27 24.2 23.5V22H8.8V23.5Q8.8 27 5.5 27Q2.2 27 2.2 23.5V22H1Q0 22 0 21V15Q0 11.5 3.7 10.5L5.5 3.5Q6.5 0 10 0ZM10.3 4.2Q9.3 4.2 9 5.2L7.8 10.3H25.2L24 5.2Q23.7 4.2 22.7 4.2ZM5.5 13.6A2.8 2.8 0 1 0 5.5 19.2A2.8 2.8 0 1 0 5.5 13.6ZM27.5 13.6A2.8 2.8 0 1 0 27.5 19.2A2.8 2.8 0 1 0 27.5 13.6Z" />
  </svg>
);

const PlaneIcon = () => (
  <svg width="30" height="30" viewBox="0 0 30 30" fill="#fff" className="-translate-y-0.5">
    <path d="M.5 17.2L29 .3Q30.2 0 30 1.2L26 26.8Q25.7 27.8 24.7 27.5L17 24.5L12.5 29.6Q11 30.5 11 28.8V23L25.5 5.2L7.5 20.8L.8 18.3Q0 17.8 .5 17.2Z" />
  </svg>
);

const WrenchIcon = () => (
  <svg width="28" height="27" viewBox="0 0 28 27" fill="#fff" className="-translate-y-px">
    <path fillRule="evenodd" d="M24.5 1.5L19.3 4.6V8.3L22 10L27.500 7Q28.300 7.300 27.900 8.800Q26 14.300 20.500 14.300Q18.600 14.300 17 13.500L6 25.800Q4 27.700 2 26L.8 24.800Q-.9 22.800 1 20.900L13.500 10.500Q12.600 8.800 12.900 6.500Q14 .5 20.200 0Q22.500 -.1 24.600 .8Q25 1.200 24.500 1.500ZM4.700 21.300A1.400 1.400 0 1 0 4.700 24.100A1.400 1.400 0 1 0 4.700 21.300Z" />
  </svg>
);

const ChartIcon = () => (
  <svg width="32" height="26" viewBox="0 0 32 26" fill="#fff" className="-translate-y-px">
    <rect x="1" y="1" width="30" height="24" rx="1.8" fill="none" stroke="#fff" strokeWidth="2" />
    <path d="M4 15.5H8.7V21.5H4ZM10.8 6.5H15.2V21.5H10.8ZM17 11H21.6V21.5H17ZM23.7 4.5H28V21.5H23.7Z" />
  </svg>
);

const Pegman = () => (
  <svg width="24" height="40" viewBox="0 0 24 40" className="-translate-y-0.5">
    <path d="M5 14H19L22.5 26L19.5 27.5L18 24V38H6V24L4.5 27.5L1.5 26Z" fill="#fbb829" stroke="#8a7444" strokeWidth="1.2" />
    <path d="M8 14L12 19.5L16 14Z" fill="#e8772e" />
    <path d="M12 28V38" stroke="#8a7444" />
    <circle cx="12" cy="7.5" r="6.5" fill="#fbb829" stroke="#8a7444" strokeWidth="1.2" />
  </svg>
);

/* ---------- Page parts ---------- */

const NAV = [
  { label: "Dashboard", icon: <GaugeIcon />, cls: "bg-[#66dff1] gap-[18px] mb-[50px]" },
  { label: "Customers", icon: <ChildIcon />, cls: "gap-[20px] mb-[49px]" },
  { label: "Trips", icon: <MarkerIcon />, cls: "gap-[19px] mb-[10px]" },
  { label: "Drivers", icon: <CarIcon />, cls: "gap-[19px] mb-[49px]" },
  { label: "Messages", icon: <PlaneIcon />, cls: "gap-[18.5px] mb-[49px]" },
  { label: "Tools", icon: <WrenchIcon />, cls: "gap-[12px] mb-[50px]" },
  { label: "Stats", icon: <ChartIcon />, cls: "gap-[12px]" },
];

const STATS = [
  { icon: <ThumbIcon />, value: "0", first: "New", second: "Totes", iconBox: "pb-0" },
  { icon: <BriefcaseIcon />, value: "0", first: "Scheduled", second: "Totes", iconBox: "pb-[7px]" },
  { icon: <TruckIcon />, value: "0", first: "Live", second: "Totes", iconBox: "pb-0" },
  { icon: <RedditIcon />, value: "36", first: "New", second: "Customers", iconBox: "pb-0" },
];

function MapPanel({ title, x, y, box, frame }: { title: string; x: number; y: number; box: string; frame: string }) {
  return (
    <section className={`shrink-0 ${box}`}>
      <h3 className="flex h-[82px] items-center justify-center bg-[#d7d7d7] text-[28px] text-[#555] [-webkit-text-stroke:0.25px_currentColor]">
        <span className="whitespace-pre">{title} - </span>
        <a className="text-[#428bca]">Full Screen</a>
      </h3>
      <div className="h-1.5 bg-white" />
      <div className={`relative h-[642px] overflow-hidden border-t-4 border-l-4 border-[#9b9b99] border-r-[#eeeeee] ${frame}`}>
        <MapCanvas x={x} y={y} width={930} />
        <div className="absolute top-5 left-5 flex h-[58px] rounded-[4px] bg-white pb-0.5 font-['Roboto',sans-serif] text-[22px] shadow-[0_1px_6px_rgba(0,0,0,0.3)]">
          <div className="-mb-0.5 flex w-[76px] items-center justify-center border-r border-[#e4e4e4] pb-0.5 font-medium text-black">Map</div>
          <div className="flex w-[110px] items-center justify-center text-[#565656]">Satellite</div>
        </div>
        <div className="absolute top-[460px] right-5 flex w-14 flex-col gap-5">
          <div className="flex h-14 items-center justify-center rounded-[4px] bg-white shadow-[0_1px_6px_rgba(0,0,0,0.3)]">
            <Pegman />
          </div>
          <div className="flex h-[112px] flex-col items-center rounded-[4px] bg-white shadow-[0_1px_6px_rgba(0,0,0,0.3)]">
            <svg width="56" height="54" viewBox="0 0 56 54" fill="#666"><path d="M18.5 24.3H26V16.7H32V24.3H39.5V30H32V37.5H26V30H18.5Z" /></svg>
            <div className="h-0.5 w-[38px] bg-[#e6e6e6]" />
            <svg width="56" height="54" viewBox="0 0 56 54" fill="#666"><path d="M18.5 24H39.5V29.7H18.5Z" /></svg>
          </div>
        </div>
      </div>
    </section>
  );
}

export default function App() {
  return (
    <div className="flex h-[1571px] w-[2405px] overflow-hidden bg-white font-['Liberation_Sans',Arial,sans-serif] text-[#555]">
      <div className="flex min-w-0 flex-1 flex-col">
        <div className="h-[7px] shrink-0 border-b border-[#777] bg-[#d3d3d3]" />
        <header className="flex h-[120px] shrink-0 items-start border-b-2 border-[#999] bg-white pr-[30px] pl-[19px]">
          <div className="mt-[45px] flex w-[34px] flex-col gap-[5.5px]">
            <span className="h-1.5 rounded-[2px] bg-[#555]" />
            <span className="h-1.5 rounded-[2px] bg-[#555]" />
            <span className="h-1.5 rounded-[2px] bg-[#555]" />
          </div>
          <svg className="mt-[13px] ml-[31px]" width="130" height="100" viewBox="-8 -20 130 100">
            <text x="3" y="52.5" textLength="98" lengthAdjust="spacingAndGlyphs" transform="translate(-5 0) skewX(6)" fontFamily="Liberation Serif, serif" fontStyle="italic" fontWeight="700" fontSize="76" fill="#5ecfcd" stroke="#5ecfcd" strokeWidth="3.2" strokeLinejoin="round">tote</text>
          </svg>
          <button className="mt-5 ml-auto flex h-[68px] w-[186px] items-center rounded-lg border-2 border-[#ccc] bg-[#5ecfcd] pl-[24px] text-[28px] font-bold text-[#333]">
            <span>Settings</span>
            <span className="mt-0.5 ml-[7px] border-x-8 border-t-8 border-x-transparent border-t-[#333]" />
          </button>
        </header>
        <div className="flex min-h-0 flex-1">
          <aside className="flex w-[409px] shrink-0 flex-col bg-[#5ecfcd] text-white">
            <div className="flex h-[250px] shrink-0 flex-col items-center pt-[30px] pr-[11px]">
              <svg width="120" height="120" viewBox="0 0 120 120">
                <circle cx="60" cy="60" r="60" fill="#7a7a7a" />
                <circle cx="59.5" cy="35" r="27" fill="#fff" />
                <path d="M37.5 111.5L27 70Q26 61 35 59Q37 59 39 60.5Q59.5 74 80 60.5Q82 59 84 59Q93 61 93 70L82.5 111.5Z" fill="#fff" />
              </svg>
              <div className="mt-[18px] text-[28px] leading-[34px] font-bold text-[#f1f1f1]">Montana</div>
            </div>
            <nav className="flex flex-col pr-5 pl-[9px]">
              {NAV.map((n) => (
                <a key={n.label} className={`flex h-24 shrink-0 items-center pl-5 text-[24px] ${n.cls}`}>
                  {n.icon}
                  <span className="[-webkit-text-stroke:0.7px_white]">{n.label}</span>
                </a>
              ))}
            </nav>
          </aside>
          <main className="min-w-0 flex-1 overflow-hidden bg-[#f1f1f1] px-[30px]">
            <div className="flex gap-[60px]">
              {STATS.map((s, i) => (
                <div key={i} className="flex h-[546px] flex-1 flex-col items-center border-b-2 border-[#999] text-center">
                  <div className={`flex h-[321px] shrink-0 items-end ${s.iconBox}`}>{s.icon}</div>
                  <div className="mt-[46px] text-[49px] leading-[56px]">{s.value}</div>
                  <div className="mt-[18px] text-[26px] leading-9 [-webkit-text-stroke:0.25px_#555]">{s.first}<br />{s.second}</div>
                </div>
              ))}
            </div>
            <div className="mt-[168px] flex gap-[60px]">
              <MapPanel title="Scheduled Trips" x={443} y={933} box="w-[938px]" frame="border-r-4" />
              <MapPanel title="Active Drivers" x={457} y={1063} box="w-[936px]" frame="border-r-2" />
            </div>
          </main>
        </div>
      </div>
      <div className="w-0.5 shrink-0 bg-linear-to-b from-[#1f6f8d] via-[#26456b] to-[#8d9094]" />
    </div>
  );
}
